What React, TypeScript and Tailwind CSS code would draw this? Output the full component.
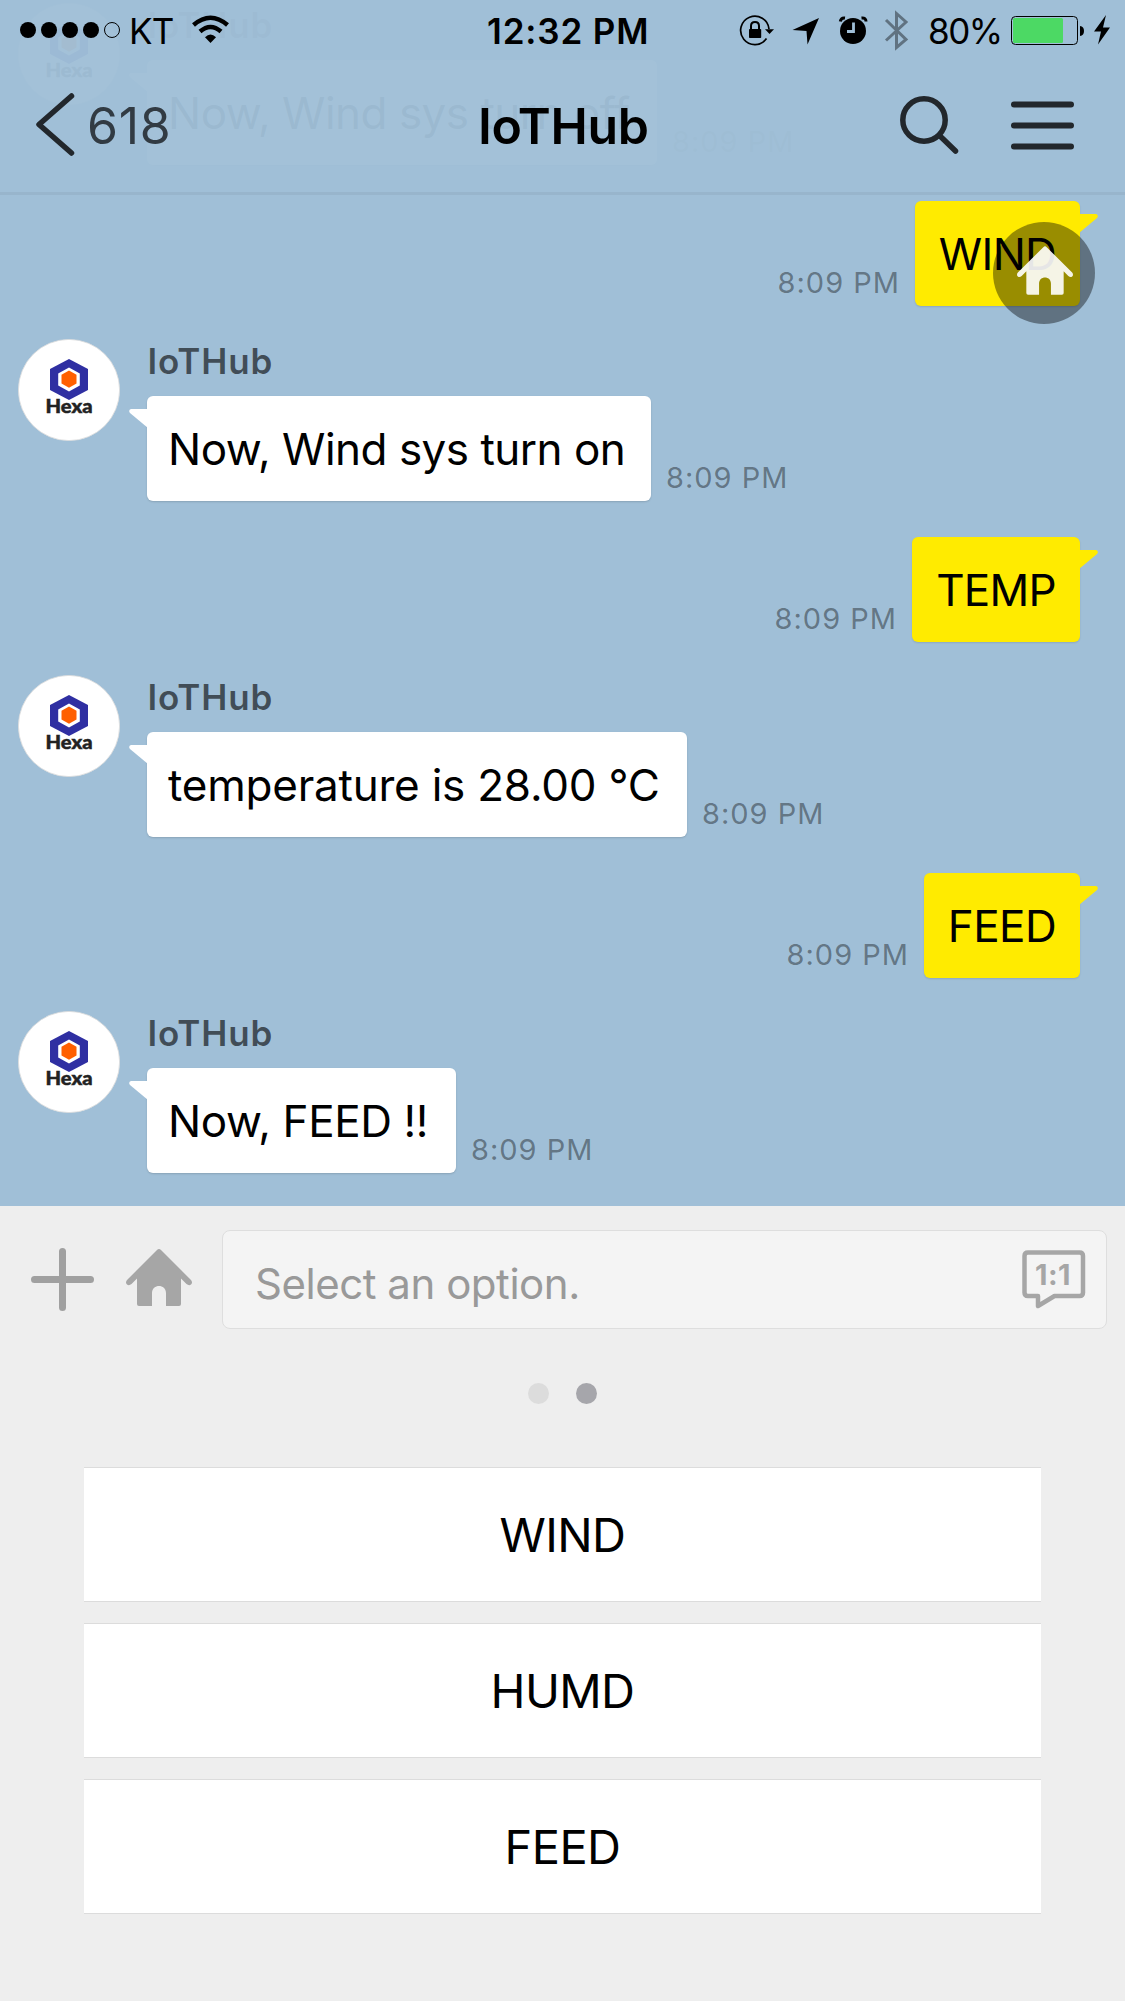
import React from "react";

function Avatar() {
  return (
    <svg viewBox="0 0 102 102" className="h-[102px] w-[102px] shrink-0">
      <circle cx="51" cy="51" r="50.6" fill="#fff" stroke="#dcdcdc" strokeWidth="0.8" />
      <path d="M51 20 70 30V51L51 61 32 51V30Z" fill="#2f2fa2" />
      <path d="M51 28.500 61.800 34.500V46.500L51 52.500 40.200 46.500V34.500Z" fill="#fff" />
      <path d="M51 31.500 58.500 35.700V44.500L51 48.800 43.500 44.500V35.700Z" fill="#ff5f00" />
      <text
        x="27.500"
        y="73.500"
        textLength="47"
        lengthAdjust="spacingAndGlyphs"
        fontFamily="Lato, sans-serif"
        fontWeight="900"
        fontSize="19.500"
        fill="#222"
        stroke="#222"
        strokeWidth="0.500"
      >
        Hexa
      </text>
    </svg>
  );
}

function Time({ className = "" }: { className?: string }) {
  return (
    <span className={`whitespace-nowrap text-[29px] leading-[36px] tracking-[1px] text-black/40 ${className}`}>
      8:09 PM
    </span>
  );
}

function Received({ text, box, tracking }: { text: string; box: string; tracking: string }) {
  return (
    <div className="flex h-[162px] pl-[18px]">
      <Avatar />
      <div className="ml-[27px] flex flex-col">
        <div className="h-[57px] pl-[0.5px] pt-[1px] text-[35px] font-semibold leading-[43px] tracking-[0.8px] text-black/60">
          IoTHub
        </div>
        <div className="flex items-end">
          <div
            className={`relative flex h-[105px] items-center rounded-[6px] bg-white pl-[21px] shadow-[0_1px_2px_rgba(0,0,0,0.15)] ${box}`}
          >
            <svg viewBox="0 0 19 20" className="absolute -left-[18px] top-[13px] h-[20px] w-[19px]">
              <path d="M19 0H2Q-1 1 1 4L19 19Z" fill="#fff" />
            </svg>
            <span className={`whitespace-nowrap text-[44px] leading-[54px] text-black ${tracking}`}>{text}</span>
          </div>
          <Time className="mb-[5px] ml-[15px]" />
        </div>
      </div>
    </div>
  );
}

function Sent({ text, box, tracking }: { text: string; box: string; tracking: string }) {
  return (
    <div className="mb-[33px] mt-[36px] flex h-[105px] items-end justify-end pr-[45px]">
      <Time className="mb-[5px] mr-[15px]" />
      <div
        className={`relative flex h-[105px] items-center justify-center rounded-[6px] bg-[#ffeb00] shadow-[0_1px_2px_rgba(0,0,0,0.12)] ${box}`}
      >
        <svg viewBox="0 0 19 20" className="absolute -right-[18px] top-[13px] h-[20px] w-[19px]">
          <path d="M0 0H17Q20 1 18 4L0 19Z" fill="#ffeb00" />
        </svg>
        <span className={`whitespace-nowrap text-[44px] leading-[54px] text-black ${tracking}`}>{text}</span>
      </div>
    </div>
  );
}

function House({ className }: { className: string }) {
  return (
    <svg viewBox="0 0 66 57" className={className} fill="currentColor">
      <path d="M31 1Q33-1 35 1L65 31Q67 33.500 65 35.500 63 37 60.500 35L55 29.500V55Q55 57 53 57H40V44C40 34.500 26 34.500 26 44V57H13Q11 57 11 55V29.500L5.500 35Q3 37 1 35.500-1 33.500 1 31Z" />
    </svg>
  );
}

function StatusBar() {
  return (
    <div className="flex h-[62px] items-center text-black">
      <svg viewBox="20 0 102 62" className="ml-[20px] h-[62px] w-[102px]">
        {[28, 49, 70, 91].map((x) => (
          <circle key={x} cx={x} cy="30" r="8" />
        ))}
        <circle cx="112" cy="30" r="7.500" fill="none" stroke="#000" />
      </svg>
      <span className="ml-[7px] w-[60px] text-[35px] leading-[42px] tracking-[-0.8px]">KT</span>
      <svg viewBox="189 0 44 62" className="h-[62px] w-[44px]">
        <path d="M210.500 43 205 37.300Q210.500 31.500 216 37.300Z" />
        <path d="M200 31.500Q210.500 22.500 221 31.500M193.500 25Q210.500 10.500 227.500 25" fill="none" stroke="#000" strokeWidth="4.500" />
      </svg>
      <span className="ml-[254px] w-[241px] text-[35px] font-semibold leading-[42px] tracking-[0.85px]">12:32 PM</span>
      <svg viewBox="738 0 38 62" className="ml-[10px] h-[62px] w-[38px]">
        <path d="M769 29A14.200 14.200 0 1 0 766.500 38.500" fill="none" stroke="#000" strokeWidth="1.700" />
        <path d="M765 29.300H774L769.500 34Z" />
        <rect x="749" y="29" width="12.200" height="9" rx="0.800" />
        <path d="M751 30V26Q751 22 755 22T759 26V30" fill="none" stroke="#000" strokeWidth="2" />
      </svg>
      <svg viewBox="790 0 32 62" className="ml-[14px] h-[62px] w-[32px]">
        <path d="M792.500 30 819 18 807.500 44.500 806.500 31Z" />
      </svg>
      <svg viewBox="837 0 32 62" className="ml-[15px] h-[62px] w-[32px]">
        <circle cx="853" cy="31" r="13" />
        <path d="M840.300 21.500Q841 17.500 845 18M861.500 18Q866 17.500 866 21.500" fill="none" stroke="#000" strokeWidth="3" />
        <path d="M853.500 22.500V31.500H847" fill="none" stroke="#a0bfd7" strokeWidth="2.800" />
      </svg>
      <svg viewBox="883 0 28 62" className="ml-[14px] h-[62px] w-[28px]">
        <path d="M886 20 906 39.500 896.500 47.500V13.500L906 22 886 40.500" fill="none" stroke="#000" strokeOpacity="0.400" strokeWidth="3" />
      </svg>
      <span className="ml-[17px] w-[82px] text-[35px] leading-[42px] tracking-[-1.500px]">80%</span>
      <svg viewBox="1010 0 104 62" className="h-[62px] w-[104px]">
        <rect x="1011.500" y="16.500" width="66" height="28" rx="4" fill="none" stroke="#000" />
        <rect x="1013" y="18" width="50" height="25" rx="1.500" fill="#4cd964" />
        <path d="M1080 26Q1084 26.500 1084 31T1080 36Z" />
        <path d="M1106 15 1094 31.500H1101L1098 44.500 1110 27.500H1103Z" />
      </svg>
    </div>
  );
}

function Header() {
  return (
    <header className="absolute inset-x-0 top-0 h-[195px] border-b-[3px] border-[#98b5cc] bg-[#a0bfd7]/97">
      <StatusBar />
      <div className="flex h-[127px] items-center">
        <svg viewBox="34 62 42 127" className="ml-[34px] h-[127px] w-[42px]">
          <path d="M71.500 96 39 124.500 71.500 153" fill="none" stroke="#22272c" strokeWidth="5.500" strokeLinecap="round" strokeLinejoin="round" />
        </svg>
        <span className="ml-[11px] w-[391px] text-[50px] leading-[60px] tracking-[0.7px] text-[#323b43]">618</span>
        <h1 className="w-[400px] text-[50px] font-semibold leading-[60px] tracking-[-0.3px] text-black">IoTHub</h1>
        <svg viewBox="898 62 62 127" className="ml-[20px] h-[127px] w-[62px]">
          <path d="M940 136 955.500 151" stroke="#22272c" strokeWidth="5.500" strokeLinecap="round" />
          <circle cx="924" cy="120" r="21.200" fill="none" stroke="#22272c" strokeWidth="5.500" />
        </svg>
        <svg viewBox="1008 62 70 127" className="ml-[48px] h-[127px] w-[70px]">
          <path d="M1014 104.500H1071M1014 125.500H1071M1014 146.500H1071" stroke="#22272c" strokeWidth="6" strokeLinecap="round" />
        </svg>
      </div>
    </header>
  );
}

function Composer() {
  return (
    <div className="flex h-[147px] items-center pr-[18px]">
      <svg viewBox="0 0 63 63" className="ml-[31px] h-[63px] w-[63px]">
        <path d="M31.500 3.500V59.500M3.500 31.500H59.500" stroke="#a0a0a0" strokeWidth="7" strokeLinecap="round" />
      </svg>
      <House className="-mt-[4px] ml-[32px] h-[57px] w-[66px] text-[#a6a6a6]" />
      <div className="ml-[30px] flex h-[99px] flex-1 items-center justify-between rounded-[8px] border border-[#dedede] bg-[#f4f4f4] pl-[32px] pr-[20px]">
        <span className="whitespace-nowrap pt-[9px] text-[42px] leading-[50px] tracking-[-0.47px] text-[#999]">Select an option.</span>
        <svg viewBox="0 0 64 60" className="h-[60px] w-[64px]">
          <path
            d="M6 2.500H57.500Q61 2.500 61 6V42.500Q61 46 57.500 46H32.500L16 56V46H6Q2.500 46 2.500 42.500V6Q2.500 2.500 6 2.500Z"
            fill="none"
            stroke="#a6a6a6"
            strokeWidth="4.500"
            strokeLinejoin="round"
          />
          <text x="31" y="35" textAnchor="middle" fontFamily="Inter, sans-serif" fontWeight="700" fontSize="29" letterSpacing="0.500" fill="#a6a6a6">
            1:1
          </text>
        </svg>
      </div>
    </div>
  );
}

export default function App() {
  return (
    <div className="h-[2001px] w-[1125px] overflow-hidden bg-[#eee] font-['Inter',sans-serif]">
      <main className="relative h-[1206px] overflow-hidden bg-[#a0bfd7] pt-[3px]">
        <Received text="Now, Wind sys turn off" box="w-[510px]" tracking="tracking-[-0.5px]" />
        <Sent text="WIND" box="w-[165px]" tracking="tracking-[-0.7px]" />
        <Received text="Now, Wind sys turn on" box="w-[504px]" tracking="tracking-[-0.5px]" />
        <Sent text="TEMP" box="w-[168px]" tracking="tracking-[-0.8px]" />
        <Received text="temperature is 28.00 °C" box="w-[540px]" tracking="tracking-[-0.22px]" />
        <Sent text="FEED" box="w-[156px]" tracking="tracking-[-0.5px]" />
        <Received text="Now, FEED !!" box="w-[309px]" tracking="tracking-[-0.4px]" />
        <Header />
        <button className="absolute right-[30px] top-[222px] flex h-[102px] w-[102px] items-center justify-center rounded-full bg-black/40">
          <House className="-mt-[6px] ml-[1px] h-[49px] w-[56px] text-white/90" />
        </button>
      </main>
      <Composer />
      <div className="mt-[30px] flex justify-center gap-[27px]">
        <span className="h-[21px] w-[21px] rounded-full bg-[#dcdcdc]" />
        <span className="h-[21px] w-[21px] rounded-full bg-[#a6a6ab]" />
      </div>
      <div className="mt-[63px] flex flex-col gap-[21px] px-[84px]">
        {["WIND", "HUMD", "FEED"].map((label) => (
          <button
            key={label}
            className="flex h-[135px] items-center justify-center border-y border-[#dcdcdc] bg-white text-[47px] leading-[56px] tracking-[-0.6px] text-black"
          >
            {label}
          </button>
        ))}
      </div>
    </div>
  );
}
